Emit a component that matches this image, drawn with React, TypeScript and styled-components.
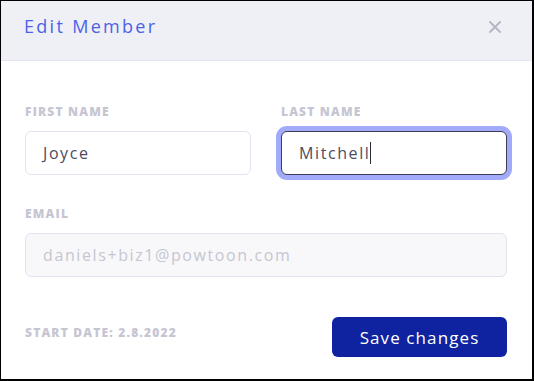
import React from "react";
import styled, { createGlobalStyle } from "styled-components";

const Global = createGlobalStyle`
  html, body { margin: 0; padding: 0; background: #fff; }
  body { font-family: "Open Sans", "Noto Sans", sans-serif; }
  * { box-sizing: border-box; }
`;

const Frame = styled.div`
  width: 534px;
  height: 381px;
  border: 1px solid #000;
  border-right-width: 2px;
  border-bottom-width: 2px;
  background: #fff;
  display: flex;
  flex-direction: column;
`;

const Header = styled.div`
  height: 60px;
  flex: none;
  background: #eff0f6;
  border-bottom: 1px solid #e3e4ee;
  padding: 13px 24px 0 23px;
  display: flex;
  justify-content: space-between;
  align-items: flex-start;
`;

const Title = styled.h2`
  margin: 0;
  font-size: 18px;
  line-height: 24px;
  font-weight: 400;
  letter-spacing: 2.3px;
  color: #4b62e6;
`;

const CloseButton = styled.button`
  margin: 7px 7px 0 0;
  padding: 0;
  border: none;
  background: transparent;
  width: 12px;
  height: 12px;
  display: flex;
  cursor: pointer;
`;

const Body = styled.div`
  padding: 44px 25px 0 24px;
  display: flex;
  flex-direction: column;
`;

const Row = styled.div`
  display: grid;
  grid-template-columns: 1fr 1fr;
  column-gap: 30px;
`;

const Field = styled.div<{ $top?: number }>`
  display: flex;
  flex-direction: column;
  margin-top: ${(p) => p.$top ?? 0}px;
`;

const Caps = styled.div`
  font-size: 12px;
  line-height: 14px;
  font-weight: 800;
  letter-spacing: 1.2px;
  color: #c6c6d3;
  text-transform: uppercase;
  white-space: nowrap;
`;

const Label = styled(Caps)`
  margin-bottom: 12px;
`;

const InputBox = styled.div<{ $focused?: boolean; $disabled?: boolean }>`
  height: 44px;
  border-radius: 6px;
  border: 1px solid ${(p) => (p.$focused ? "#3d3d55" : "#e4e2f1")};
  background: ${(p) => (p.$disabled ? "#f8f8fa" : "#fff")};
  box-shadow: ${(p) => (p.$focused ? "0 0 0 5px #a2aafa" : "none")};
  padding: 0 17px;
  display: flex;
  align-items: center;
  font-size: 16px;
  letter-spacing: 1.6px;
  color: ${(p) => (p.$disabled ? "#c6c6d1" : "#4c4c61")};
  white-space: nowrap;
`;

const Caret = styled.span`
  display: inline-block;
  width: 1px;
  height: 22px;
  background: #2a2a38;
  margin-left: 0px;
`;

const Footer = styled.div`
  margin-top: 40px;
  display: flex;
  justify-content: space-between;
  align-items: center;
`;

const StartDate = styled(Caps)`
  margin-bottom: 8px;
`;

const SaveButton = styled.button`
  width: 175px;
  height: 40px;
  border: none;
  border-radius: 6px;
  background: #0f23a0;
  color: #fff;
  font-family: "Open Sans", "Noto Sans", sans-serif;
  font-size: 17px;
  font-weight: 500;
  letter-spacing: 1.1px;
  cursor: pointer;
`;

export default function App() {
  return (
    <>
      <Global />
      <Frame>
        <Header>
          <Title>Edit Member</Title>
          <CloseButton aria-label="Close">
            <svg width="12" height="12" viewBox="0 0 12 12">
              <path d="M1 1L11 11M11 1L1 11" stroke="#b4b4c3" strokeWidth="1.8" strokeLinecap="round" />
            </svg>
          </CloseButton>
        </Header>
        <Body>
          <Row>
            <Field>
              <Label>First name</Label>
              <InputBox>Joyce</InputBox>
            </Field>
            <Field>
              <Label>Last name</Label>
              <InputBox $focused>
                Mitchell
                <Caret />
              </InputBox>
            </Field>
          </Row>
          <Field $top={32}>
            <Label>Email</Label>
            <InputBox $disabled>daniels+biz1@powtoon.com</InputBox>
          </Field>
          <Footer>
            <StartDate>START DATE: 2.8.2022</StartDate>
            <SaveButton>Save changes</SaveButton>
          </Footer>
        </Body>
      </Frame>
    </>
  );
}
